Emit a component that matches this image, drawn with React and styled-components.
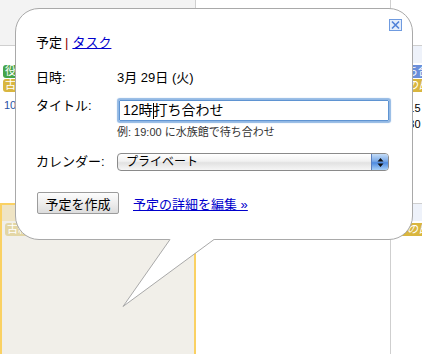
import React from "react";
import styled, { createGlobalStyle } from "styled-components";

const GlobalStyle = createGlobalStyle`
  html, body {
    margin: 0;
    padding: 0;
    background: #fff;
  }
  body {
    font-family: "Liberation Sans", "Noto Sans CJK JP", sans-serif;
    color: #000;
  }
`;

const Page = styled.div`
  position: relative;
  width: 422px;
  height: 354px;
  overflow: hidden;
`;

const Calendar = styled.div`
  display: grid;
  grid-template-columns: 196px 195px 1fr;
  grid-template-rows: 45px 158px 151px;
  height: 354px;
`;

const Cell = styled.div`
  box-sizing: border-box;
  border-right: 1px solid #cfcfcf;
  border-top: ${(p) => (p.$first ? "none" : "1px solid #cfcfcf")};
  background: ${(p) => p.$bg || "#fff"};
  display: flex;
  flex-direction: column;
  font-size: 11px;
`;

const TodayCell = styled(Cell)`
  border: 2px solid #fad163;
  border-bottom: none;
  background: #f1efe9;
`;

const DayHead = styled.div`
  height: ${(p) => p.$h || 17}px;
  flex: none;
  background: ${(p) => p.$bg || "transparent"};
`;

const Event = styled.div`
  margin: ${(p) => (p.$gap ? 2 : 1)}px 3px 0 3px;
  height: 13px;
  line-height: 13px;
  padding: 0 2px;
  border-radius: 3px;
  background: ${(p) => p.$color};
  color: #fff;
  font-style: ${(p) => (p.$italic ? "italic" : "normal")};
  white-space: nowrap;
  overflow: hidden;
`;

const EventText = styled.div`
  margin: ${(p) => p.$mt || 3}px 3px 0 ${(p) => p.$ml || 4}px;
  line-height: 13px;
  color: ${(p) => p.$color || "#000"};
  white-space: nowrap;
`;

const Bubble = styled.div`
  position: absolute;
  left: 15px;
  top: 8px;
  width: 398px;
  height: 232px;
  box-sizing: border-box;
  border: 1px solid #a9a9a9;
  border-radius: 24px;
  background: #fff;
  padding: 26px 21px 0 20px;
  font-size: 13px;
`;

const Tail = styled.svg`
  position: absolute;
  left: 115px;
  top: 238px;
  display: block;
`;

const CloseButton = styled.svg`
  position: absolute;
  left: 373px;
  top: 10px;
  cursor: pointer;
`;

const Tabs = styled.div`
  line-height: 16px;
`;

const Sep = styled.span`
  color: #8b0000;
  margin: 0 4px 0 3px;
`;

const Link = styled.a`
  color: #0000cc;
  text-decoration: underline;
  cursor: pointer;
`;

const Row = styled.div`
  display: flex;
  align-items: ${(p) => p.$align || "flex-start"};
  margin-top: ${(p) => p.$mt}px;
`;

const Label = styled.div`
  width: 81px;
  flex: none;
  line-height: ${(p) => p.$lh || 16}px;
`;

const Value = styled.div`
  line-height: 16px;
`;

const InputBox = styled.div`
  width: 271px;
  height: 21px;
  margin: 2px;
  box-sizing: border-box;
  border: 1px solid #5f94d2;
  box-shadow: 0 0 1px 2px #92b8e4;
  border-radius: 1px;
  padding-left: 3px;
  font-size: 14px;
  line-height: 19px;
  display: flex;
  align-items: center;
  white-space: nowrap;
`;

const Caret = styled.span`
  display: inline-block;
  width: 1px;
  height: 16px;
  background: #000;
`;

const Hint = styled.div`
  margin: 3px 0 0 81px;
  font-size: 11px;
  line-height: 13px;
  color: #333;
`;

const Select = styled.div`
  width: 272px;
  height: 18px;
  box-sizing: border-box;
  border: 1px solid #8a8a8a;
  border-radius: 4px;
  background: linear-gradient(#ffffff, #f1f1f1 45%, #e2e2e2 55%, #f6f6f6);
  display: flex;
  font-size: 12px;
  overflow: hidden;
`;

const SelectText = styled.div`
  flex: 1;
  padding-left: 8px;
  line-height: 16px;
`;

const SelectArrows = styled.div`
  width: 16px;
  border-left: 1px solid #5a7fbf;
  background: linear-gradient(#c4dcf7, #79a9e8 45%, #4d8ae0 55%, #a9d0f7);
  display: flex;
  align-items: center;
  justify-content: center;
`;

const Button = styled.button`
  margin-left: 1px;
  width: 82px;
  height: 22px;
  box-sizing: border-box;
  border: 1px solid #9c9c9c;
  border-radius: 2px;
  background: linear-gradient(#fdfdfd, #eeeeee 50%, #dcdcdc);
  font-family: inherit;
  font-size: 13px;
  color: #000;
  padding: 0;
`;

const ActionLink = styled(Link)`
  margin-left: 14px;
`;

const App = () => {
  return (
    <>
      <GlobalStyle />
      <Page>
        <Calendar>
          <Cell $first $bg="#f3f3f3" />
          <Cell $first />
          <Cell $first />

          <Cell>
            <DayHead />
            <Event $gap $color="#47a449">役員会議</Event>
            <Event $color="#d9b63f">古紙回収</Event>
            <EventText $mt={7} $color="#2952a3">10:00 歯医者</EventText>
          </Cell>
          <Cell>
            <DayHead $bg="#eef2fa" />
          </Cell>
          <Cell>
            <DayHead $bg="#eef2fa" />
            <Event $gap $color="#6a8ed9">待ち合わせ</Event>
            <Event $italic $color="#d9b63f">ミの日</Event>
            <EventText $mt={10} $ml={2}>10:15 打合せ</EventText>
            <EventText $ml={2}>18:30 食事</EventText>
          </Cell>

          <TodayCell>
            <DayHead $h={16} $bg="#efe4c4" />
            <Event $gap $color="#e3d6a4">古紙回収</Event>
          </TodayCell>
          <Cell>
            <DayHead $bg="#eef2fa" />
          </Cell>
          <Cell>
            <DayHead $bg="#eef2fa" />
            <Event $gap $italic $color="#d9b63f">ミの日</Event>
          </Cell>
        </Calendar>

        <Bubble>
          <CloseButton width="13" height="12" viewBox="0 0 13 12">
            <rect x="0.5" y="0.5" width="12" height="11" fill="#e4edfb" stroke="#6f9be0" />
            <path d="M3 2.5 L10 9.5 M10 2.5 L3 9.5" stroke="#4f80d8" strokeWidth="1.6" />
          </CloseButton>

          <Tabs>
            予定<Sep>|</Sep><Link>タスク</Link>
          </Tabs>

          <Row $mt={19}>
            <Label>日時:</Label>
            <Value>3月 29日 (火)</Value>
          </Row>

          <Row $mt={12}>
            <Label>タイトル:</Label>
            <InputBox>
              12時<Caret />打ち合わせ
            </InputBox>
          </Row>
          <Hint>例: 19:00 に水族館で待ち合わせ</Hint>

          <Row $mt={14} $align="center">
            <Label $lh={18}>カレンダー:</Label>
            <Select>
              <SelectText>プライベート</SelectText>
              <SelectArrows>
                <svg width="7" height="11" viewBox="0 0 7 11">
                  <path d="M3.5 1 L6.5 4.5 L0.5 4.5 Z M3.5 10 L6.5 6.5 L0.5 6.5 Z" fill="#111" />
                </svg>
              </SelectArrows>
            </Select>
          </Row>

          <Row $mt={21} $align="center">
            <Button>予定を作成</Button>
            <ActionLink>予定の詳細を編集 »</ActionLink>
          </Row>
        </Bubble>

        <Tail width="105" height="72" viewBox="0 0 105 72">
          <polygon points="54,0 100,0 99,1.5 8,68.5 55,1.5" fill="#fff" />
          <path d="M55 1.5 L8 68.5 L99 1.5" fill="none" stroke="#a9a9a9" strokeWidth="1" />
        </Tail>
      </Page>
    </>
  );
};

export default App;
